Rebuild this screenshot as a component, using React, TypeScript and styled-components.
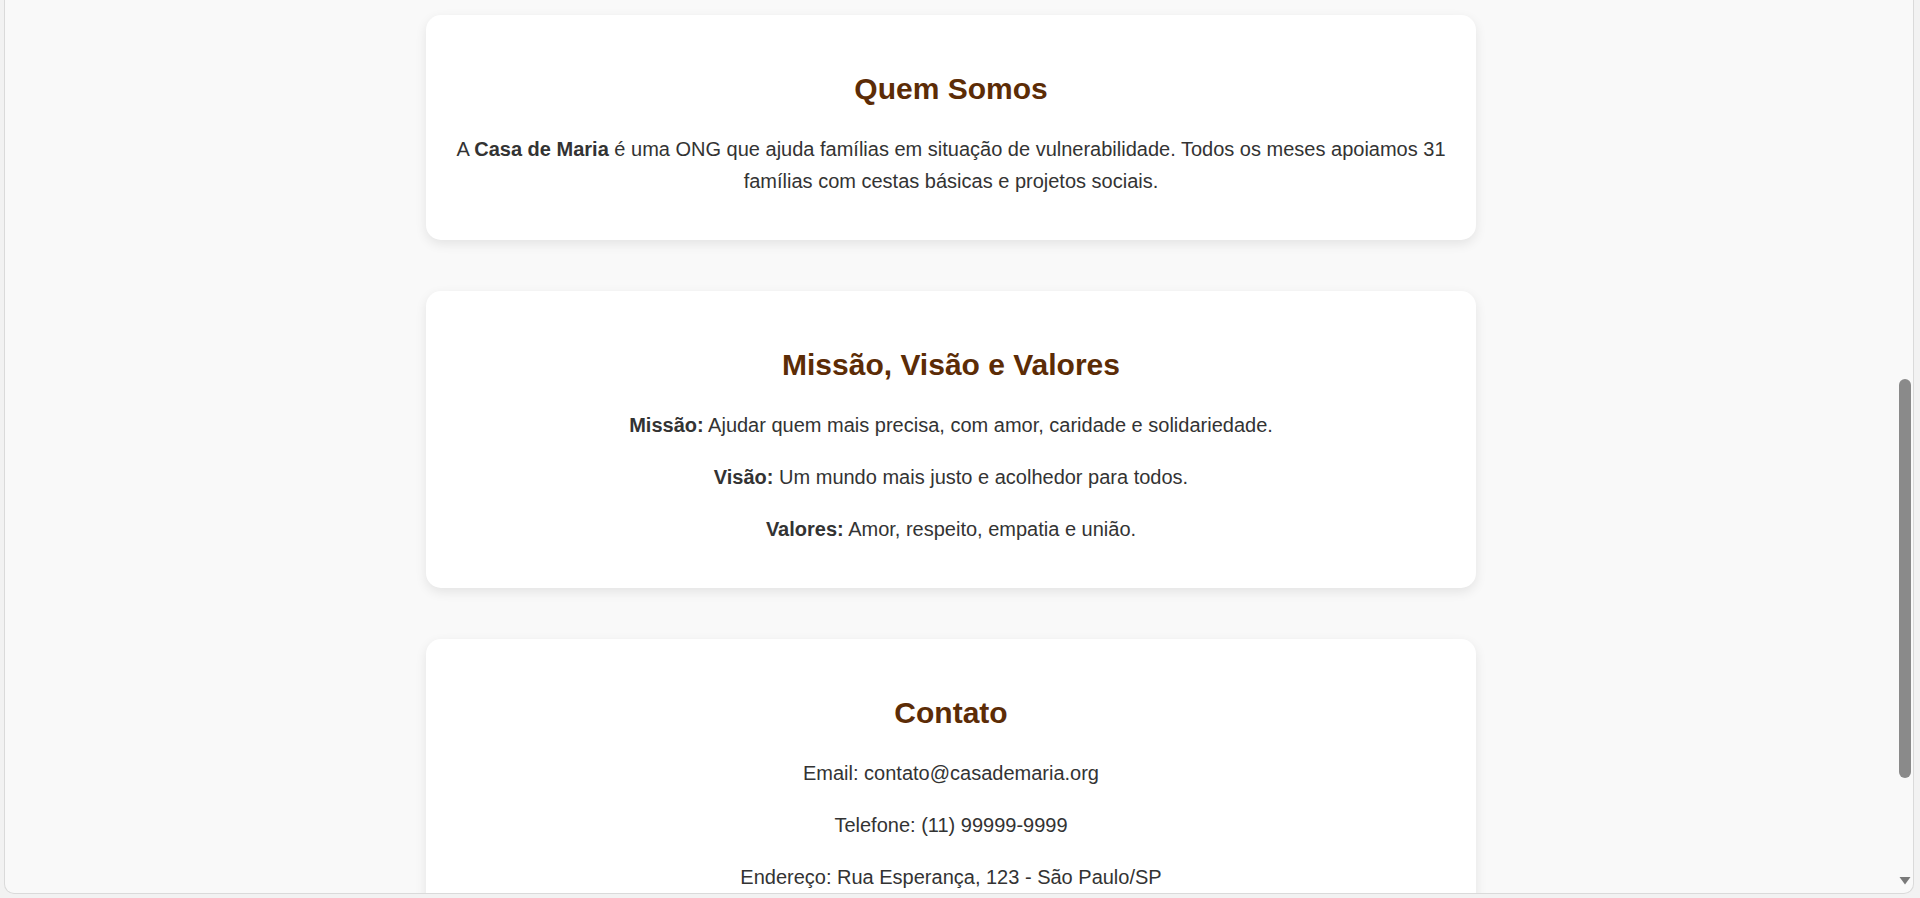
import styled, { createGlobalStyle } from "styled-components";

const GlobalStyle = createGlobalStyle`
  html, body {
    margin: 0;
    padding: 0;
  }
  body {
    background-color: #f2f2f2;
    font-family: "Liberation Sans", Arial, sans-serif;
    overflow: hidden;
  }
`;

const Shell = styled.div`
  height: 898px;
  box-sizing: border-box;
  padding: 0 6px 4px 4px;
  display: flex;
`;
const Window = styled.div`
  flex: 1;
  display: flex;
  background-color: #f9f9f9;
  border: 1px solid #dadada;
  border-top: none;
  border-radius: 0 0 10px 10px;
  overflow: hidden;
`;
const Main = styled.main`
  flex: 1;
  display: flex;
  flex-direction: column;
  align-items: center;
  padding-top: 15px;
  overflow: hidden;
`;
const Section = styled.section`
  width: 1000px;
  flex-shrink: 0;
  padding: 25px 25px 23px;
  margin-bottom: 51px;
  background-color: #fff;
  border-radius: 15px;
  box-shadow: 0 4px 12px rgba(0, 0, 0, 0.09);
  text-align: center;
  color: #333;
  font-size: 20px;
  line-height: 1.6;
`;
const Title = styled.h2`
  font-size: 30px;
  font-weight: 700;
  color: #5c2c06;
  margin: 25px 0 20px;
`;
const Text = styled.p`
  margin: 20px 0;
`;
const ScrollTrack = styled.div`
  width: 16px;
  display: flex;
  flex-direction: column;
  align-items: center;
`;
const Thumb = styled.div`
  width: 12px;
  height: 399px;
  margin-top: 379px;
  border-radius: 6px;
  background-color: #8a8a8a;
`;
const Spacer = styled.div`
  flex: 1;
`;
const Arrow = styled.svg`
  width: 12px;
  height: 9px;
  margin-bottom: 8px;
`;

const App = () => {
  return (
    <>
      <GlobalStyle />
      <Shell>
        <Window>
          <Main>
            <Section>
              <Title>Quem Somos</Title>
              <Text>
                A <strong>Casa de Maria</strong> é uma ONG que ajuda famílias em
                situação de vulnerabilidade. Todos os meses apoiamos 31 famílias
                com cestas básicas e projetos sociais.
              </Text>
            </Section>
            <Section>
              <Title>Missão, Visão e Valores</Title>
              <Text>
                <strong>Missão:</strong> Ajudar quem mais precisa, com amor,
                caridade e solidariedade.
              </Text>
              <Text>
                <strong>Visão:</strong> Um mundo mais justo e acolhedor para todos.
              </Text>
              <Text>
                <strong>Valores:</strong> Amor, respeito, empatia e união.
              </Text>
            </Section>
            <Section>
              <Title>Contato</Title>
              <Text>Email: contato@casademaria.org</Text>
              <Text>Telefone: (11) 99999-9999</Text>
              <Text>Endereço: Rua Esperança, 123 - São Paulo/SP</Text>
            </Section>
          </Main>
          <ScrollTrack>
            <Thumb />
            <Spacer />
            <Arrow viewBox="0 0 12 9">
              <path d="M0.5 1 L11.5 1 L6 8.5 Z" fill="#7a7a7a" />
            </Arrow>
          </ScrollTrack>
        </Window>
      </Shell>
    </>
  );
};

export default App;
